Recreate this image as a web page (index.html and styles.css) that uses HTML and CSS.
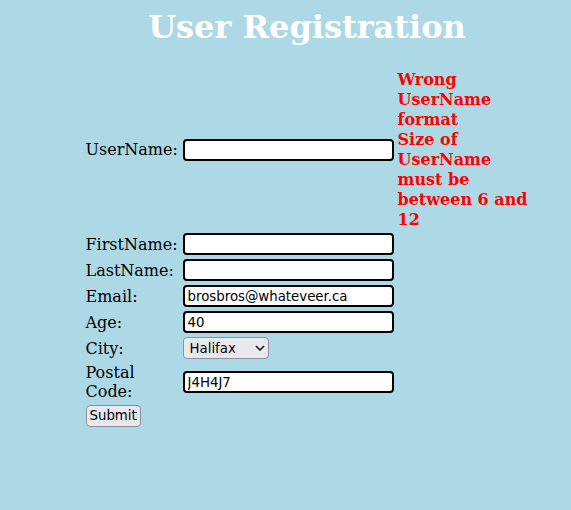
FILE: index.html
```html
<!DOCTYPE html>
<html>
<head>
<meta charset="utf-8">
<title>User Registration</title>
<link rel="stylesheet" href="styles.css">
</head>
<body>
<div class="page">
  <h1 class="title">User Registration</h1>
  <form class="reg-form">
    <table class="reg-table">
      <tr>
        <td class="label">UserName:</td>
        <td><input class="field" type="text"></td>
        <td class="error">Wrong UserName format<br>Size of UserName must be between 6 and 12</td>
      </tr>
      <tr>
        <td class="label">FirstName:</td>
        <td><input class="field" type="text"></td>
        <td></td>
      </tr>
      <tr>
        <td class="label">LastName:</td>
        <td><input class="field" type="text"></td>
        <td></td>
      </tr>
      <tr>
        <td class="label">Email:</td>
        <td><input class="field" type="text" value="brosbros@whateveer.ca"></td>
        <td></td>
      </tr>
      <tr>
        <td class="label">Age:</td>
        <td><input class="field" type="text" value="40"></td>
        <td></td>
      </tr>
      <tr>
        <td class="label">City:</td>
        <td>
          <div class="select">
            <span>Halifax</span>
            <svg class="chev" width="10" height="6" viewBox="0 0 10 6"><path d="M1 1 L5 5 L9 1" fill="none" stroke="#1b1b1b" stroke-width="1.6"/></svg>
          </div>
        </td>
        <td></td>
      </tr>
      <tr>
        <td class="label">Postal<br>Code:</td>
        <td><input class="field" type="text" value="J4H4J7"></td>
        <td></td>
      </tr>
      <tr>
        <td class="label"><button class="btn" type="button">Submit</button></td>
        <td></td>
        <td></td>
      </tr>
    </table>
  </form>
</div>
</body>
</html>
```

FILE: styles.css
```css
html, body {
  background: #add8e6;
}
body {
  margin: 8px;
  font-family: "DejaVu Serif", serif;
  font-size: 16px;
  color: #000;
}
.page {
  padding-left: 43px;
}
.title {
  margin: 0 0 21px 0;
  text-align: center;
  color: #fff;
  font-size: 32px;
  font-weight: bold;
}
.reg-form {
  margin: 0;
}
.reg-table {
  margin: 0 auto;
  border-spacing: 2px;
}
.reg-table td {
  padding: 1px;
  vertical-align: middle;
}
.label {
  width: 93px;
}
.reg-table td.error {
  width: 131px;
  padding: 1px 1px 0 1px;
  color: #ff0000;
  font-weight: bold;
  font-size: 16px;
  line-height: 20px;
}
.field {
  box-sizing: border-box;
  width: 211px;
  height: 22px;
  margin: 0;
  padding: 1px 3px;
  border: 2px solid #000;
  border-radius: 4px;
  background: #fff;
  font-family: "DejaVu Sans", sans-serif;
  font-size: 13.33px;
  color: #000;
  display: block;
}
.select {
  box-sizing: border-box;
  width: 86px;
  height: 22px;
  border: 1px solid #8f8f9d;
  border-radius: 4px;
  background: #e9e9ed;
  display: flex;
  align-items: center;
  justify-content: space-between;
  padding: 0 3px 0 6px;
  font-family: "DejaVu Sans", sans-serif;
  font-size: 13.33px;
  color: #000;
}
.chev {
  display: block;
}
.btn {
  margin: 0;
  padding: 2px 3px;
  border: 1px solid #8f8f9d;
  border-radius: 4px;
  background: #e9e9ed;
  font-family: "DejaVu Sans", sans-serif;
  font-size: 13.33px;
  color: #000;
  height: 22px;
  line-height: 16px;
}
```
